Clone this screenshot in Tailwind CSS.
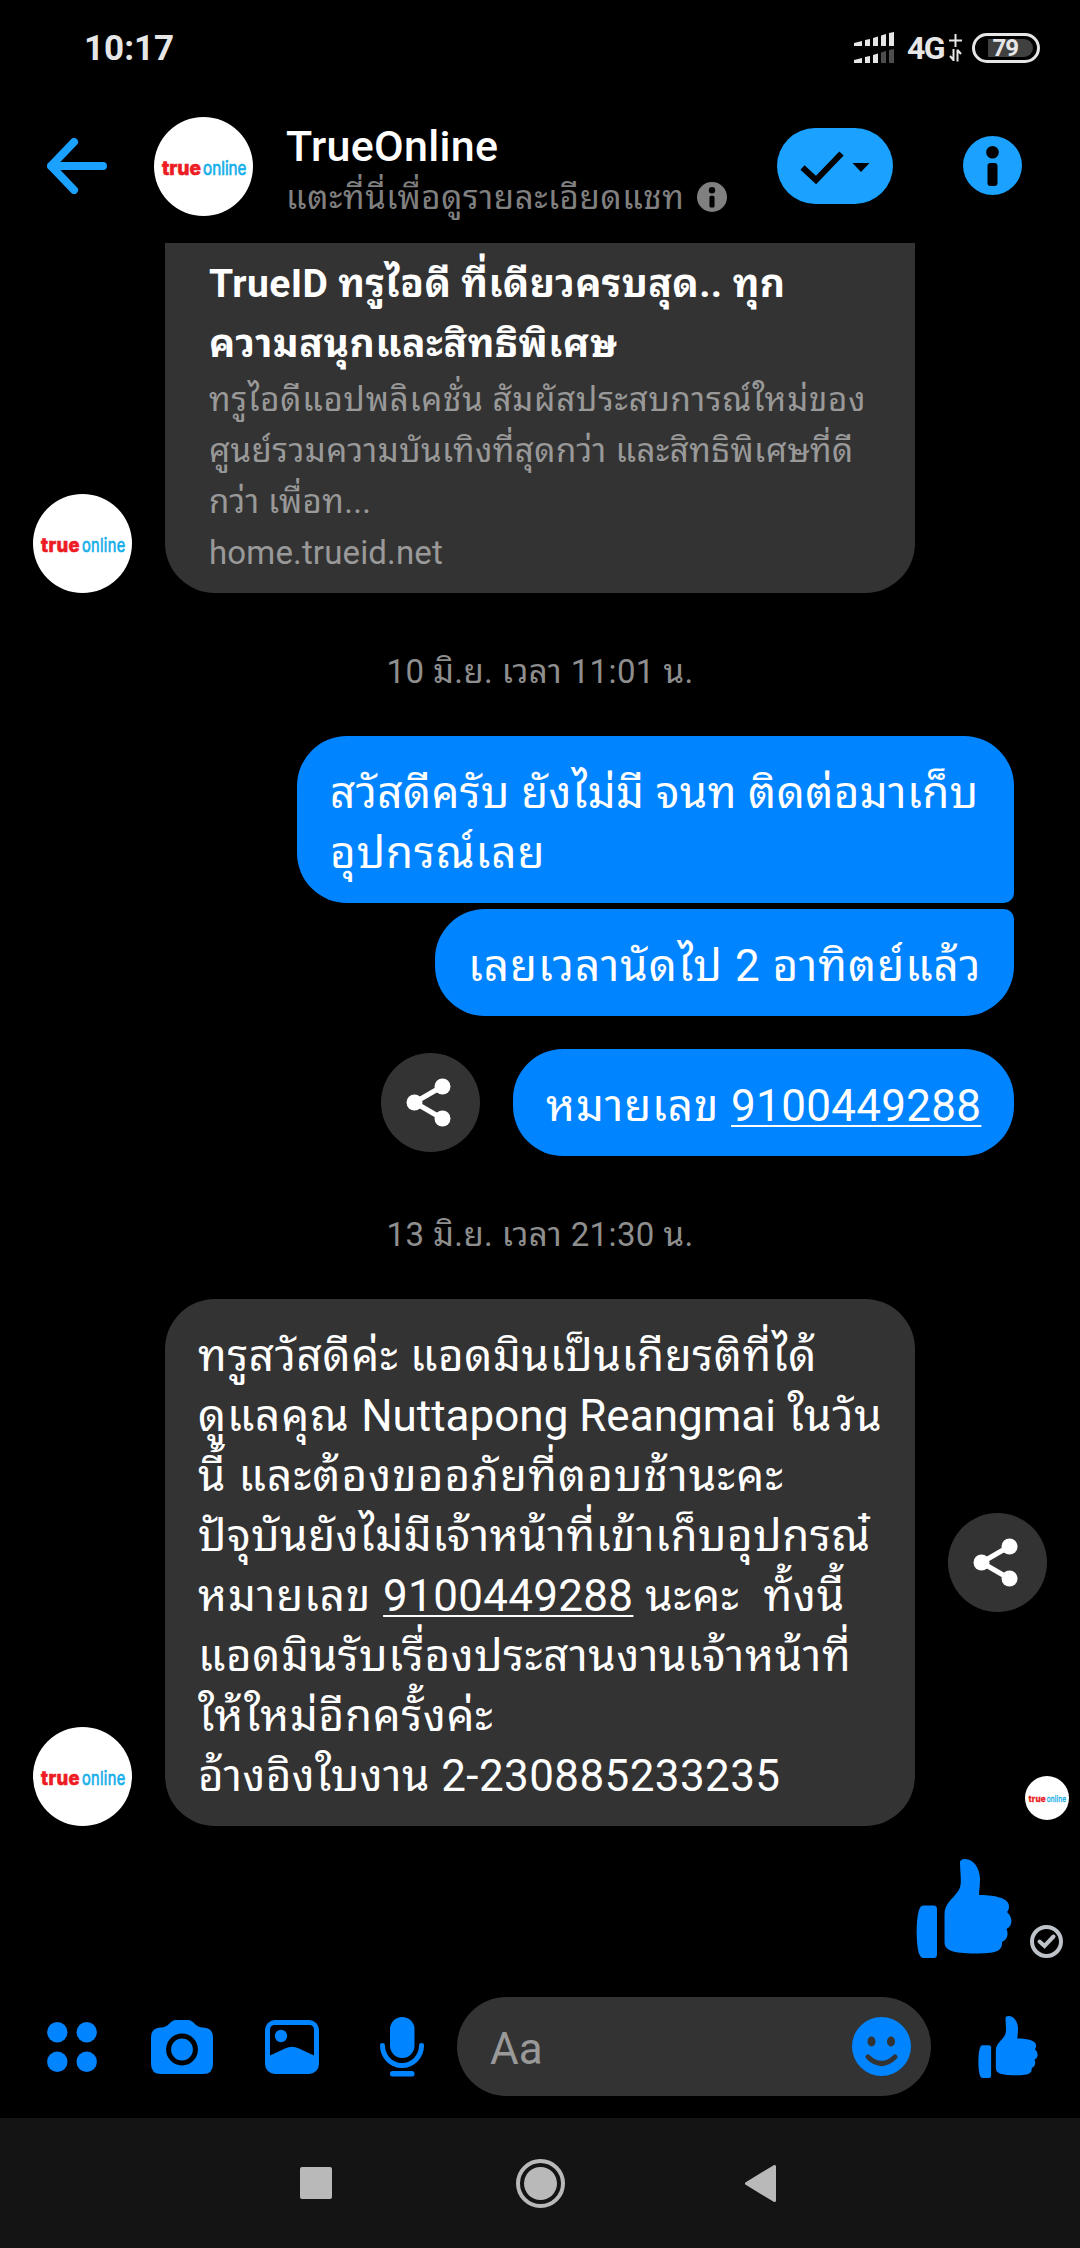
<!DOCTYPE html>
<html lang="th">
<head>
  <meta charset="UTF-8">
  <meta name="viewport" content="width=device-width, initial-scale=1.0">
  <title>TrueOnline</title>
  <script src="https://cdn.jsdelivr.net/npm/@tailwindcss/browser@4"></script>
</head>
<body class="bg-black">

<!-- Shared icons -->
<svg class="hidden">
  <symbol id="avatar" viewBox="0 0 99 99">
    <circle cx="49.5" cy="49.5" r="49.5" fill="#fff"/>
    <text x="8" y="58" font-family="Inter, sans-serif" font-weight="800" font-size="19" fill="#ed1c24" stroke="#ed1c24" stroke-width=".6" textLength="39" lengthAdjust="spacingAndGlyphs">true</text>
    <text x="49" y="58" font-family="Inter, sans-serif" font-size="19" fill="#13aeea" stroke="#13aeea" stroke-width=".7" textLength="43.500" lengthAdjust="spacingAndGlyphs">online</text>
  </symbol>
  <symbol id="thumb" viewBox="0 0 96 99">
    <path d="M7 46.500h10.500q3.500 0 3.500 3.500v45.500q0 3.500-3.500 3.500H7Q1 99 .6 73 1 46.500 7 46.500z"/>
    <path d="M44 4c0-3 2-4 5-4 9 0 15 10 15 20 0 7-1 12-1 16 12 0 30 2 30 11 0 3-.5 4-2 6 6 5 6 14-.5 17 2.500 5 .5 11-4.500 13 .5 8-4 11.500-23 11.500C40 94.500 28.500 93 28.500 83V55c0-10 7-14 13-22 5-7 3-12 2.500-29z"/>
  </symbol>
  <symbol id="share" viewBox="0 0 99 99">
    <circle cx="49.500" cy="49.500" r="49.500" fill="#333"/>
    <path d="M62 33L33.500 49.500 62 66" fill="none" stroke="#fff" stroke-width="5"/>
    <g fill="#fff"><circle cx="61.500" cy="33.500" r="8"/><circle cx="33.500" cy="49.500" r="8"/><circle cx="61.500" cy="65.500" r="8"/></g>
  </symbol>
  <symbol id="info" viewBox="0 0 59 59">
    <path fill-rule="evenodd" d="M29.500 0a29.500 29.500 0 1 1 0 59 29.500 29.500 0 0 1 0-59zM29.500 10a6.300 6.300 0 1 0 0 12.600 6.300 6.300 0 0 0 0-12.600zM27.500 27q-3 0-3 3v17q0 3 3 3h4q3 0 3-3V30q0-3-3-3z"/>
  </symbol>
</svg>

<div class="w-[1080px] h-[2248px] bg-black text-white flex flex-col overflow-hidden font-['Roboto','Noto_Sans_Thai_Looped',sans-serif]">

  <!-- Status bar -->
  <div class="h-[96px] shrink-0 flex items-center justify-between pl-[84px] pr-[40px] text-[#e6e6e6]">
    <span class="text-[35px] font-bold leading-none">10:17</span>
    <div class="flex items-center">
      <svg class="w-[40px] h-[32px] mr-[13px]" viewBox="0 0 40 32" fill="#e6e6e6">
        <path d="M0 11l8-2v5H0zM11 8l5-1v7h-5zM19 6l5-1.500V14h-5zM27 3.500L32 2v12h-5zM35 1l5-1v14h-5z"/>
        <path d="M0 28l8-2v5H0zM11 25l5-1v7h-5zM19 23l5-1.500V31h-5z"/>
        <path fill="#4d4d4d" d="M27 20.500l5-1.500v12h-5zM35 18l5-1v14h-5z"/>
      </svg>
      <span class="text-[32px] font-bold leading-none w-[42px] tracking-[-1.500px]">4G</span>
      <svg class="w-[13px] h-[28px] mr-[10px]" viewBox="0 0 13 28" fill="none" stroke="#e6e6e6" stroke-width="2">
        <path d="M6.500 0v13M0 6.500h13M4.500 15v12M1 22l3.500 4M8.500 27.500v-12M12 20l-3.500-4"/>
      </svg>
      <div class="w-[68px] h-[30px] rounded-full border-[3px] border-[#e6e6e6] flex items-center justify-center">
        <span class="w-[45px] h-[18px] ml-[8px] bg-[#404040] rounded-l-[2px] rounded-r-full flex items-center pl-[5px] text-[24px] font-bold tracking-[-1px]">79</span>
      </div>
    </div>
  </div>

  <!-- Chat header -->
  <div class="h-[147px] shrink-0 flex items-start pl-[47px]">
    <svg class="w-[60px] h-[56px] mt-[42px] mr-[47px]" viewBox="0 0 60 56" fill="none" stroke="#1ba1ff" stroke-width="8" stroke-linecap="round" stroke-linejoin="round">
      <path d="M27 4L4 28l23 24M4 28h52"/>
    </svg>
    <svg class="w-[99px] h-[99px] mt-[21px] mr-[33px]"><use href="#avatar"/></svg>
    <div class="w-[491px] mt-[22px]">
      <div class="text-[43px] font-medium leading-[56px] tracking-[0.3px]">TrueOnline</div>
      <div class="flex items-center h-[46px] text-[#808080] text-[33px]">
        <span class="w-[411px] whitespace-nowrap tracking-[0.65px] pt-[2px]">แตะที่นี่เพื่อดูรายละเอียดแชท</span>
        <svg class="w-[30px] h-[30px]" fill="#808080"><use href="#info"/></svg>
      </div>
    </div>
    <div class="w-[116px] h-[76px] mt-[32px] mr-[70px] rounded-full bg-[#1ba1ff]">
      <svg class="w-[116px] h-[76px]" viewBox="0 0 116 76">
        <path d="M25.500 39.500L39 52l25.500-26.500" fill="none" stroke="#000" stroke-width="6"/>
        <path d="M75.500 35h17L84 44z"/>
      </svg>
    </div>
    <svg class="w-[59px] h-[59px] mt-[40px]" fill="#1ba1ff"><use href="#info"/></svg>
  </div>

  <!-- Messages -->
  <div class="h-[1718px] shrink-0 flex flex-col text-[44px] leading-[60px] tracking-[0.4px] whitespace-nowrap">
    <div class="flex items-end pl-[33px] gap-[33px]">
      <svg class="w-[99px] h-[99px]"><use href="#avatar"/></svg>
      <div class="w-[750px] h-[350px] bg-[#333] rounded-b-[50px] pl-[44px] pt-[11px]">
        <div class="text-[39px] font-bold">
          <p>TrueID ทรูไอดี ที่เดียวครบสุด.. ทุก</p>
          <p class="tracking-[0.6px]">ความสนุกและสิทธิพิเศษ</p>
        </div>
        <div class="text-[33px] leading-[51px] text-[#999]">
          <p class="tracking-[0.8px]">ทรูไอดีแอปพลิเคชั่น สัมผัสประสบการณ์ใหม่ของ</p>
          <p class="tracking-[0.5px]">ศูนย์รวมความบันเทิงที่สุดกว่า และสิทธิพิเศษที่ดี</p>
          <p>กว่า เพื่อท...</p>
          <p class="tracking-[0.15px]">home.trueid.net</p>
        </div>
      </div>
    </div>

    <div class="h-[143px] pt-[49px] text-center text-[33px] leading-[60px] text-[#8e8e8e]">10 มิ.ย. เวลา 11:01 น.</div>

    <div class="flex flex-col items-end pr-[66px]">
      <div class="w-[717px] h-[167px] bg-[#0084ff] rounded-[50px] rounded-br-[10px] pl-[33px] pt-[27px]">
        <p>สวัสดีครับ ยังไม่มี จนท ติดต่อมาเก็บ</p>
        <p class="tracking-[0.95px]">อุปกรณ์เลย</p>
      </div>
      <div class="mt-[6px] w-[579px] h-[107px] bg-[#0084ff] rounded-[50px] rounded-tr-[10px] pl-[33px] pt-[27px] tracking-[1px]">เลยเวลานัดไป 2 อาทิตย์แล้ว</div>
      <div class="mt-[33px] flex items-center gap-[33px]">
        <svg class="w-[99px] h-[99px]"><use href="#share"/></svg>
        <div class="w-[501px] h-[107px] bg-[#0084ff] rounded-[50px] pl-[33px] pt-[27px] tracking-[0.9px]">หมายเลข <span class="underline decoration-2 underline-offset-4 tracking-[0.3px]">9100449288</span></div>
      </div>
    </div>

    <div class="h-[143px] pt-[49px] text-center text-[33px] leading-[60px] text-[#8e8e8e]">13 มิ.ย. เวลา 21:30 น.</div>

    <div class="relative flex items-end pl-[33px] gap-[33px]">
      <svg class="w-[99px] h-[99px]"><use href="#avatar"/></svg>
      <div class="w-[750px] h-[527px] bg-[#333] rounded-[50px] pl-[33px] pt-[27px]">
        <p class="tracking-[0.65px]">ทรูสวัสดีค่ะ แอดมินเป็นเกียรติที่ได้</p>
        <p class="tracking-[0.8px]">ดูแลคุณ <span class="tracking-normal">Nuttapong Reangmai</span> ในวัน</p>
        <p class="tracking-[1.1px]">นี้ และต้องขออภัยที่ตอบช้านะคะ</p>
        <p class="tracking-[0.55px]">ปัจุบันยังไม่มีเจ้าหน้าที่เข้าเก็บอุปกรณ๋</p>
        <p class="tracking-[0.9px]">หมายเลข <span class="underline decoration-2 underline-offset-4 tracking-[0.3px]">9100449288</span> นะคะ &nbsp;ทั้งนี้</p>
        <p class="tracking-[0.65px]">แอดมินรับเรื่องประสานงานเจ้าหน้าที่</p>
        <p class="tracking-[0.7px]">ให้ใหม่อีกครั้งค่ะ</p>
        <p>อ้างอิงใบงาน 2-230885233235</p>
      </div>
      <svg class="w-[99px] h-[99px] self-center"><use href="#share"/></svg>
      <svg class="absolute right-[11px] bottom-[6px] w-[44px] h-[44px]"><use href="#avatar"/></svg>
    </div>

    <div class="flex justify-end items-end mt-[33px] pr-[17px] gap-[18px]">
      <svg class="w-[96px] h-[99px]" fill="#0084ff"><use href="#thumb"/></svg>
      <svg class="w-[33px] h-[33px]" viewBox="0 0 33 33" fill="none" stroke="#bec2c9">
        <circle cx="16.500" cy="16.500" r="14.500" stroke-width="4"/>
        <path d="M9.500 16.500l5 4.500 9-9.500" stroke-width="4" stroke-linecap="round"/>
      </svg>
    </div>
  </div>

  <!-- Composer -->
  <div class="h-[157px] shrink-0 flex items-start pt-[36px]">
    <div class="h-[99px] w-full flex items-center pl-[47px]">
      <svg class="w-[51px] h-[50px] mr-[53px]" viewBox="0 0 51 50" fill="#0084ff">
        <circle cx="10.300" cy="10.300" r="10.200"/><circle cx="39.700" cy="10.300" r="10.200"/>
        <circle cx="10.300" cy="39.700" r="10.200"/><circle cx="39.700" cy="39.700" r="10.200"/>
      </svg>
      <svg class="w-[62px] h-[54px] mr-[52px]" viewBox="0 0 62 54">
        <path fill="#0084ff" d="M10 7.500c8 0 9-7.500 15-7.500h12c6 0 7 7.500 15 7.500q10 0 10 10V44q0 10-10 10H10Q0 54 0 44V17.500q0-10 10-10z"/>
        <circle cx="31" cy="29.500" r="13.400" fill="#0084ff" stroke="#000" stroke-width="5"/>
      </svg>
      <svg class="w-[54px] h-[54px] mr-[61px]" viewBox="0 0 54 54" fill="#0084ff">
        <rect width="54" height="54" rx="10"/>
        <path fill="#000" d="M5 35.500V10q0-5 5-5h34q5 0 5 5v25.500L34 28.500q-7-3.500-14 0z"/>
        <circle cx="16" cy="16" r="6.200"/>
      </svg>
      <svg class="w-[44px] h-[60px] mr-[33px]" viewBox="0 0 44 60" fill="#0084ff">
        <rect x="10" width="24.500" height="41" rx="12.200"/>
        <path d="M2.500 28.500a19.500 20 0 0 0 39 0" fill="none" stroke="#0084ff" stroke-width="5" stroke-linecap="round"/>
        <rect x="10" y="54" width="24.500" height="5.500" rx="2.500"/>
      </svg>
      <div class="w-[474px] h-[99px] bg-[#333] rounded-full flex items-center justify-between pl-[33px] pr-[20px]">
        <span class="text-[44px] leading-none text-[#999] pt-[4px]">Aa</span>
        <svg class="w-[59px] h-[59px]" viewBox="0 0 59 59">
          <circle cx="29.500" cy="29.500" r="29.500" fill="#0084ff"/>
          <g fill="#333"><ellipse cx="19.500" cy="24.500" rx="4" ry="5"/><ellipse cx="39" cy="24.500" rx="4" ry="5"/></g>
          <path d="M16 40q13.500 13 27 0" fill="none" stroke="#333" stroke-width="5" stroke-linecap="round"/>
        </svg>
      </div>
      <svg class="w-[60px] h-[62px] ml-[47px]" fill="#0084ff"><use href="#thumb"/></svg>
    </div>
  </div>

  <!-- System navigation -->
  <div class="h-[130px] shrink-0 bg-[#141414] flex items-center pl-[300px]">
    <div class="w-[32px] h-[32px] rounded-[2px] bg-[#b9b9b9] mr-[184px]"></div>
    <svg class="w-[49px] h-[49px] mr-[180px]" viewBox="0 0 49 49">
      <circle cx="24.500" cy="24.500" r="22.500" fill="none" stroke="#b9b9b9" stroke-width="4"/>
      <circle cx="24.500" cy="24.500" r="16.500" fill="#b9b9b9"/>
    </svg>
    <svg class="w-[31px] h-[37px]" viewBox="0 0 31 37" fill="#b9b9b9" stroke="#b9b9b9" stroke-width="3" stroke-linejoin="round"><path d="M29.500 1.500v34L1.500 18.500z"/></svg>
  </div>
</div>

</body>
</html>
